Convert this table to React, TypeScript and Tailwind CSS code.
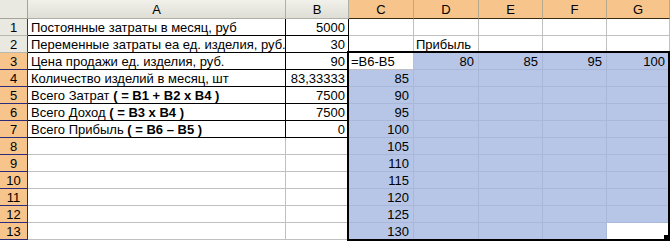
import React from "react";

// Excel-2003 style sheet: fixed costs table + profit grid selection
const COLS = ["A", "B", "C", "D", "E", "F", "G"];
const SELECTED_COLS = ["C", "D", "E", "F", "G"];

type Cell = { text?: React.ReactNode; align?: "left" | "right" };

const tableRows: Cell[][] = [
  [{ text: "Постоянные затраты в месяц, руб" }, { text: "5000", align: "right" }],
  [{ text: "Переменные затраты еа ед. изделия, руб." }, { text: "30", align: "right" }],
  [{ text: "Цена продажи ед. изделия, руб." }, { text: "90", align: "right" }],
  [{ text: "Количество изделий в месяц, шт" }, { text: "83,33333", align: "right" }],
  [
    {
      text: (
        <span>
          Всего Затрат <b>( = B1 + B2 x B4 )</b>
        </span>
      ),
    },
    { text: "7500", align: "right" },
  ],
  [
    {
      text: (
        <span>
          Всего Доход <b>( = B3 x B4 )</b>
        </span>
      ),
    },
    { text: "7500", align: "right" },
  ],
  [
    {
      text: (
        <span>
          Всего Прибыль <b>( = B6 – B5 )</b>
        </span>
      ),
    },
    { text: "0", align: "right" },
  ],
];

const prices = ["80", "85", "95", "100"];
const volumes = ["85", "90", "95", "100", "105", "110", "115", "120", "125", "130"];

function RowHeader({ n }: { n: number }) {
  const selected = n >= 3;
  return (
    <div
      className={
        selected
          ? "flex items-center justify-center border-r border-b border-[#2b2b7a] bg-[#f7c58b]"
          : "flex items-center justify-center border-r border-b border-r-[#3a3a3a] border-b-[#b9b8ae] bg-[#e9e8e1]"
      }
    >
      {n}
    </div>
  );
}

export default function App() {
  const rows: React.ReactNode[] = [];

  for (let r = 1; r <= 13; r++) {
    const inTable = r <= 7;
    const t = inTable ? tableRows[r - 1] : null;

    rows.push(<RowHeader key={`h${r}`} n={r} />);

    // A and B
    rows.push(
      <div
        key={`a${r}`}
        className={`flex items-center overflow-visible whitespace-nowrap pl-[3px] border-r border-b ${
          inTable ? "border-black" : "border-[#c0c0c0]"
        }`}
      >
        {t?.[0].text}
      </div>
    );
    rows.push(
      <div
        key={`b${r}`}
        className={`flex items-center justify-end pr-[3px] border-r border-b ${
          inTable ? "border-black" : "border-b-[#c0c0c0] border-r-black"
        }`}
      >
        {t?.[1].text}
      </div>
    );

    // C..G
    for (let c = 0; c < 5; c++) {
      if (r <= 2) {
        rows.push(
          <div
            key={`c${r}${c}`}
            className="flex items-center whitespace-nowrap pl-[2px] border-r border-b border-[#c0c0c0]"
          >
            {r === 2 && c === 1 ? "Прибыль" : ""}
          </div>
        );
        continue;
      }
      let text = "";
      if (r === 3 && c > 0) text = prices[c - 1];
      if (r > 3 && c === 0) text = volumes[r - 4];
      const white = (r === 3 && c === 0) || (r === 13 && c === 4);
      rows.push(
        <div
          key={`c${r}${c}`}
          className={`flex items-center justify-end pr-[4px] border-r border-b ${
            white ? "bg-white border-[#c0c0c0]" : "bg-[#b7c6e6] border-[#a9b8d8]"
          }`}
        >
          {text}
        </div>
      );
    }
  }

  return (
    <div className="relative w-[670px] h-[241px] overflow-hidden bg-white text-[13px] leading-none text-black font-['Liberation_Sans',Arial,sans-serif]">
      <div className="grid grid-cols-[28px_258px_63px_65px_65px_64px_64px_63px] grid-rows-[19px_repeat(13,17px)]">
        {/* corner */}
        <div className="border-r border-b border-[#a5a49a] bg-[#e9e8e1]" />
        {COLS.map((col) =>
          SELECTED_COLS.includes(col) ? (
            <div
              key={col}
              className="flex items-center justify-center border-r border-r-[#b9a98c] border-b border-b-[#3c2a10] bg-[#f7c58b]"
            >
              {col}
            </div>
          ) : (
            <div
              key={col}
              className="flex items-center justify-center border-r border-b border-[#b0afa5] bg-gradient-to-b from-[#f1f0ea] to-[#dfded6]"
            >
              {col}
            </div>
          )
        )}
        {rows}
      </div>

      {/* selection outline C3:G13 */}
      <div className="pointer-events-none absolute left-[347px] top-[51px] h-[190px] w-[323px] border-[2px] border-black" />

      {/* cell in edit mode */}
      <div className="absolute left-[349px] top-[53px] flex h-[16px] w-[64px] items-center bg-white pl-[2px]">
        =B6-B5
      </div>

      {/* fill handle */}
      <div className="absolute left-[664px] top-[235px] h-[5px] w-[5px] bg-black" />
    </div>
  );
}
